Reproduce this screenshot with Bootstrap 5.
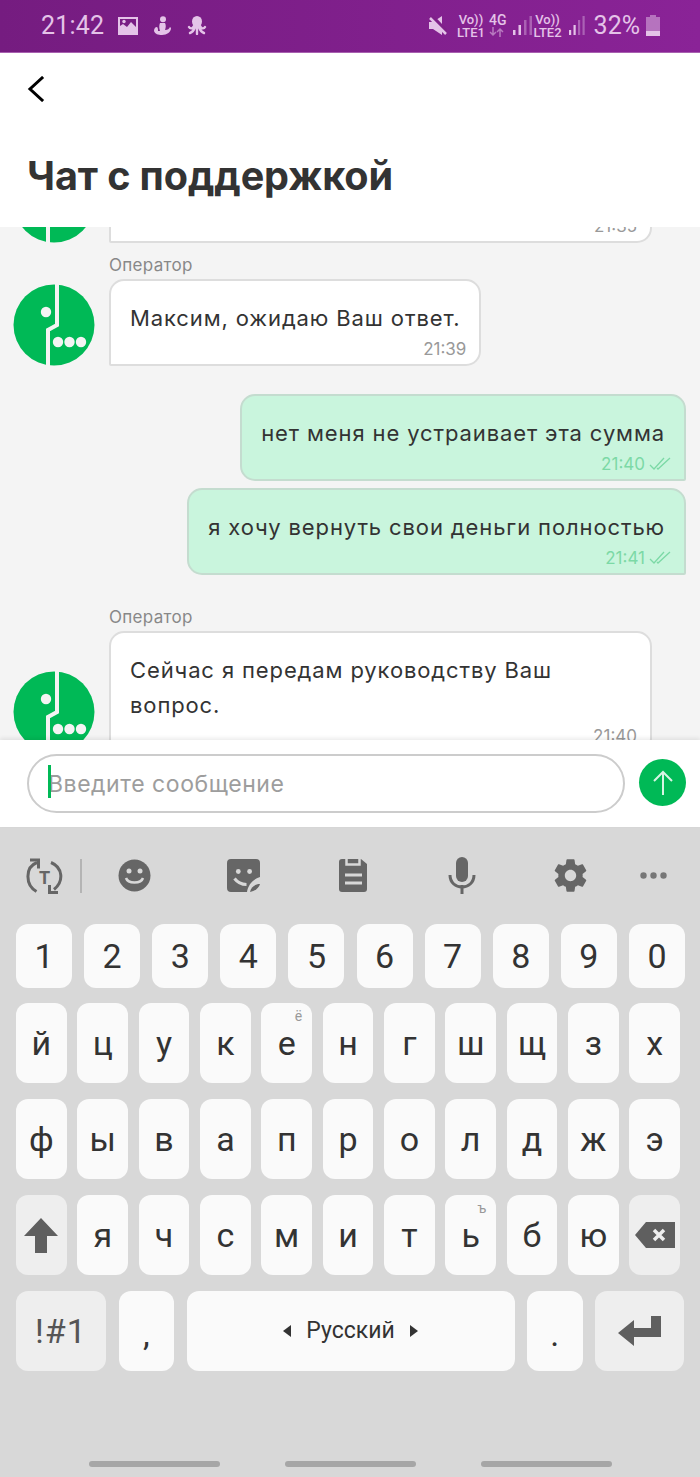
<!DOCTYPE html>
<html lang="ru">

<head>
    <meta charset="UTF-8">
    <title>Чат с поддержкой</title>
    <link href="https://cdn.jsdelivr.net/npm/bootstrap@5.3.0/dist/css/bootstrap.min.css" rel="stylesheet">
    <style>
        html, body { margin: 0; background: #d8d8d8; }
        .phone { width: 700px; height: 1477px; overflow: hidden; font-family: Inter, "Noto Sans", sans-serif; }

        /* status bar */
        .status-bar { height: 53px; padding: 0 40px 1px 41px; background: linear-gradient(90deg, #751c80, #8a2397); border-bottom: 1px solid #a860b0; color: #e4c3e8; font-family: Roboto, sans-serif; }
        .status-time { font-size: 25px; letter-spacing: .2px; margin-right: 14px; }
        .status-pct { font-size: 25px; margin: 0 6px 0 9px; }
        .net-tag { font-size: 13px; line-height: 13px; font-weight: 500; text-align: center; }
        .st-mute { margin-right: 10px; }
        .st-lte { margin-right: 4px; }
        .st-lte.two { margin-right: 7px; }
        .st-four { margin-right: 7px; font-size: 14px; }

        /* header */
        .app-head { height: 174px; background: #fff; padding: 23px 0 0 27px; position: relative; z-index: 2; }
        .app-title { font-size: 39.6px; font-weight: 700; line-height: 46px; color: #333; margin: 51px 0 0 0; letter-spacing: -.1px; }

        /* chat */
        .chat-pane { height: 513px; overflow: hidden; background: #f4f4f4; padding: 0 14px 0 13px; }
        .msg-bubble { border: 2px solid #ddd; background: #fff; padding: 20px 19px 5px; font-size: 22px; line-height: 35px; letter-spacing: .88px; color: #333; border-radius: 15px 15px 15px 2px; }
        .msg-bubble.mine { background: #c9f5dd; border-color: #c4dccf; border-radius: 15px 15px 2px 15px; }
        .msg-time { font-size: 17px; line-height: 20px; color: #999; text-align: right; margin: 3px -6px 0 0; letter-spacing: 0; }
        .mine .msg-time { color: #7cd9a6; }
        .op-label { font-size: 17px; line-height: 22px; color: #888; margin: 0 0 3px 96px; letter-spacing: .3px; }
        .op-row { gap: 14px; }
        .op-row.cut-row { margin-top: -66px; }
        .op-logo { width: 82px; height: 82px; flex: none; }
        .top-cut { height: 76px; width: 543px; }

        /* input */
        .input-bar { height: 87px; background: #fff; padding: 14px 14px 0 27px; box-shadow: 0 -2px 4px rgba(0,0,0,.08); position: relative; z-index: 2; gap: 14px; }
        .msg-field { height: 59px; border: 2px solid #ccc; border-radius: 30px; padding-left: 19px; font-size: 23px; letter-spacing: .55px; color: #333; background: #fff; width: 598px; outline: 0; }
        .msg-field::placeholder { color: #9d9d9d; opacity: 1; }
        .caret-mark { position: absolute; left: 48px; top: 25px; width: 3px; height: 33px; background: #00b956; }
        .send-round { width: 47px; height: 47px; background: #00b956; border: 0; border-radius: 50%; margin-top: 5px; padding: 0; }

        /* keyboard */
        .kb-wrap { height: 650px; background: #d8d8d8; font-family: Roboto, sans-serif; padding: 0 15px 0 16px; }
        .kb-tools { height: 97px; color: #666; }
        .tool-t { width: 56px; }
        .tool-sep { width: 2px; height: 34px; background: #b4b4b4; margin: 0 0 0 8px; }
        .tool-cell { width: 109px; }
        .tool-cell.first { margin-left: -2px; }
        .tool-more { width: 54px; margin-left: 1px; }
        .kb-row { gap: 10.55px; margin-bottom: 16px; margin-right: 5px; }
        .kb-row.digits { gap: 12.1px; margin-bottom: 15px; margin-right: 0; }
        .kb-key { flex: 1 1 0; height: 80px; background: #fafafa; border-radius: 12px; font-size: 34px; color: #333; position: relative; }
        .digits .kb-key { height: 64px; font-size: 34px; }
        .kb-key.func { background: #eee; color: #555; }
        .kb-key sup { position: absolute; top: 6px; right: 10px; font-size: 14px; line-height: 1; color: #999; }
        .kb-row.bottom { gap: 12.5px; margin-right: 0; }
        .kb-row.bottom .kb-key { flex: none; }
        .w-sym { width: 90px; font-size: 34px !important; letter-spacing: 1px; }
        .w-dot { width: 55.5px; padding-top: 6px; }
        .w-space { width: 328px; font-size: 23px !important; gap: 15px; }
        .w-enter { width: 89px; }
        .gesture-row { margin-top: 90px; height: 6px; padding-left: 73px; }
        .gesture-bar { width: 131px; height: 6px; border-radius: 3px; background: #a6a6a6; margin-right: 65px; }
    </style>
</head>

<body>
    <div class="phone d-flex flex-column">
        <!-- status bar -->
        <div class="status-bar d-flex align-items-center">
            <span class="status-time">21:42</span>
            <svg width="20" height="18" viewBox="0 0 20 18" fill="#e4c3e8" class="me-3"><path fill-rule="evenodd" d="M0 0h20v18H0zM2 2v7l3-2 4 3 4-5 5 5V2z"/><circle cx="6" cy="4.500" r="1.700"/></svg>
            <svg width="17" height="19" viewBox="0 0 17 19" fill="#e4c3e8" class="me-3"><circle cx="9" cy="3.200" r="3"/><path d="M6 7h5c1 2 1 4 0 7 3 0 4-1 5-3l1 1c0 4-4 7-9 7-4 0-7-1-8-4 0-2 1-4 3-4 1 1 1 2 1 4h2c-1-3-1-6 0-8z"/></svg>
            <svg width="20" height="19" viewBox="0 0 20 19" fill="none" stroke="#e4c3e8" stroke-width="2.400" stroke-linecap="round"><ellipse cx="10" cy="5.500" rx="5" ry="5.500" fill="#e4c3e8" stroke="none"/><path d="M7 10c-1 3-4 3-5 1M8 11c-1 3-2 5-5 6M10 11v7M12 11c1 3 2 5 5 6M13 10c1 3 4 3 5 1"/></svg>

            <div class="ms-auto d-flex align-items-center">
                <svg width="18" height="19" viewBox="0 0 18 19" fill="#e4c3e8" class="st-mute"><path d="M0 6h4l9-6v19L4 13H0z"/><path d="M2 0l16 17" stroke="#7f2089" stroke-width="5"/><path d="M1 2l16 16" stroke="#e4c3e8" stroke-width="2.500"/></svg>
                <div class="net-tag st-lte"><div>Vo))</div><div>LTE1</div></div>
                <div class="net-tag st-four"><div>4G</div>
                    <svg width="15" height="10" viewBox="0 0 15 10" fill="none" stroke="#e4c3e8" stroke-width="1.500" opacity=".55" class="d-block"><path d="M4 0v8M1 5l3 3 3-3M11 10V2M8 5l3-3 3 3"/></svg>
                </div>
                <svg width="20" height="19" viewBox="0 0 20 19" fill="#e4c3e8"><rect x="0" y="14" width="2.500" height="5"/><rect x="5.500" y="9" width="2.500" height="10"/><rect x="11" y="4" width="2.500" height="15" opacity=".4"/><rect x="16.500" y="0" width="2.500" height="19" opacity=".4"/></svg>
                <div class="net-tag st-lte two"><div>Vo))</div><div>LTE2</div></div>
                <svg width="16" height="19" viewBox="0 0 16 19" fill="#e4c3e8"><rect x="0" y="14" width="2.200" height="5"/><rect x="4.500" y="9" width="2.200" height="10"/><rect x="9" y="4" width="2.200" height="15" opacity=".4"/><rect x="13.500" y="0" width="2.200" height="19" opacity=".4"/></svg>
                <span class="status-pct">32%</span>
                <svg width="14" height="21" viewBox="0 0 14 21" fill="#e4c3e8"><path d="M4 0h6v2h4v19H0V2h4z" opacity=".5"/><rect y="16" width="14" height="5"/></svg>
            </div>
        </div>

        <!-- header -->
        <div class="app-head">
            <svg width="18" height="26" viewBox="0 0 18 26" fill="none" stroke="#000" stroke-width="3" stroke-linecap="square" class="d-block"><path d="M15 2L3 13l12 11"/></svg>
            <h1 class="app-title">Чат с поддержкой</h1>
        </div>

        <!-- messages -->
        <div class="chat-pane">
            <div class="d-flex op-row cut-row align-items-end">
                <svg class="op-logo" viewBox="0 0 82 82"><use href="#mf-logo"/></svg>
                <div class="msg-bubble top-cut d-flex flex-column justify-content-end"><div class="msg-time">21:35</div></div>
            </div>

            <div class="op-label" style="margin-top:11px">Оператор</div>
            <div class="d-flex op-row align-items-end">
                <svg class="op-logo" viewBox="0 0 82 82"><use href="#mf-logo"/></svg>
                <div class="msg-bubble">Максим, ожидаю Ваш ответ.<div class="msg-time">21:39</div></div>
            </div>

            <div class="d-flex justify-content-end" style="margin-top:28px">
                <div class="msg-bubble mine">нет меня не устраивает эта сумма
                    <div class="msg-time d-flex justify-content-end align-items-center gap-1">21:40
                        <svg width="22" height="14" viewBox="0 0 22 14" fill="none" stroke="#7cd9a6" stroke-width="1.300"><path d="M1 8l4 4L15 1M8 11l1 1L21 1"/></svg>
                    </div>
                </div>
            </div>
            <div class="d-flex justify-content-end" style="margin-top:7px">
                <div class="msg-bubble mine">я хочу вернуть свои деньги полностью
                    <div class="msg-time d-flex justify-content-end align-items-center gap-1">21:41
                        <svg width="22" height="14" viewBox="0 0 22 14" fill="none" stroke="#7cd9a6" stroke-width="1.300"><path d="M1 8l4 4L15 1M8 11l1 1L21 1"/></svg>
                    </div>
                </div>
            </div>

            <div class="op-label" style="margin-top:31px">Оператор</div>
            <div class="d-flex op-row align-items-end">
                <svg class="op-logo" viewBox="0 0 82 82"><use href="#mf-logo"/></svg>
                <div class="msg-bubble" style="width:543px">Сейчас я передам руководству Ваш вопрос.<div class="msg-time">21:40</div></div>
            </div>
        </div>

        <!-- input -->
        <div class="input-bar d-flex align-items-start">
            <input class="msg-field" type="text" placeholder="Введите сообщение">
            <span class="caret-mark"></span>
            <button class="send-round d-flex align-items-center justify-content-center" type="button" aria-label="Отправить">
                <svg width="22" height="26" viewBox="0 0 22 26" fill="none" stroke="#d6f5e3" stroke-width="2"><path d="M11 25V2M2 11l9-9 9 9"/></svg>
            </button>
        </div>

        <!-- keyboard -->
        <div class="kb-wrap">
            <div class="kb-tools d-flex align-items-center">
                <div class="tool-t d-flex justify-content-center">
                    <svg width="37" height="36" viewBox="0 0 37 36" fill="none" stroke="#666" stroke-width="3"><path d="M11 4.500C-1 9-1 27 10.500 33.500M25 4.500c12 5 13 19 3 27"/><path d="M4 2h8.500v8.500M32 34.500h-8.500V27"/><text x="18.500" y="26" text-anchor="middle" font-family="Roboto, sans-serif" font-size="18" font-weight="700" fill="#666" stroke="none">T</text></svg>
                </div>
                <span class="tool-sep"></span>
                <div class="tool-cell first d-flex justify-content-center">
                    <svg width="33" height="33" viewBox="0 0 33 33"><circle cx="16.500" cy="16.500" r="16" fill="#666"/><circle cx="11" cy="12" r="2.500" fill="#d8d8d8"/><circle cx="22" cy="12" r="2.500" fill="#d8d8d8"/><path d="M8 19c2 6 15 6 17 0" fill="none" stroke="#d8d8d8" stroke-width="2.500"/></svg>
                </div>
                <div class="tool-cell d-flex justify-content-center">
                    <svg width="33" height="33" viewBox="0 0 33 33"><path d="M4 0h25a4 4 0 0 1 4 4v14c-7 2-12 8-13 15H4a4 4 0 0 1-4-4V4a4 4 0 0 1 4-4z" fill="#666"/><circle cx="11.300" cy="12.500" r="2.400" fill="#d8d8d8"/><circle cx="22.600" cy="12.500" r="2.400" fill="#d8d8d8"/><path d="M7.500 19.500c3 4 7 6 12 6" fill="none" stroke="#d8d8d8" stroke-width="3"/><path d="M33 25c-1 4-5 7-10 8 1-5 5-8 10-8z" fill="#666"/></svg>
                </div>
                <div class="tool-cell d-flex justify-content-center">
                    <svg width="28" height="33" viewBox="0 0 28 33"><path d="M3 0h19l6 5v25a3 3 0 0 1-3 3H3a3 3 0 0 1-3-3V3a3 3 0 0 1 3-3z" fill="#666"/><path d="M7.500 0v5.500h13V0" fill="none" stroke="#d8d8d8" stroke-width="2.500"/><path d="M6 16h17M6 24h17" stroke="#d8d8d8" stroke-width="3"/></svg>
                </div>
                <div class="tool-cell d-flex justify-content-center">
                    <svg width="28" height="37" viewBox="0 0 28 37"><rect x="8" y="0" width="12" height="25" rx="6" fill="#666"/><path d="M2 18c0 16 24 16 24 0" fill="none" stroke="#666" stroke-width="3"/><rect x="12.500" y="28" width="3" height="9" fill="#666"/></svg>
                </div>
                <div class="tool-cell d-flex justify-content-center">
                    <svg width="39" height="39" viewBox="0 0 24 24" fill="#666"><path d="M19.430 12.980c.04-.32.07-.64.07-.98s-.03-.66-.07-.98l2.110-1.650c.19-.15.24-.42.12-.64l-2-3.460c-.12-.22-.39-.3-.61-.22l-2.490 1c-.52-.4-1.080-.73-1.690-.98l-.38-2.650C14.460 2.180 14.250 2 14 2h-4c-.25 0-.46.18-.49.42l-.38 2.650c-.61.25-1.170.59-1.690.98l-2.490-1c-.23-.09-.49 0-.61.22l-2 3.460c-.13.22-.07.49.12.64l2.110 1.650c-.04.32-.07.65-.07.98s.03.66.07.98l-2.110 1.650c-.19.15-.24.42-.12.64l2 3.460c.12.22.39.3.61.22l2.490-1c.52.4 1.080.73 1.690.98l.38 2.650c.03.24.24.42.49.42h4c.25 0 .46-.18.49-.42l.38-2.650c.61-.25 1.170-.59 1.690-.98l2.490 1c.23.09.49 0 .61-.22l2-3.460c.12-.22.07-.49-.12-.64l-2.110-1.650zM12 15.500c-1.930 0-3.500-1.570-3.500-3.500s1.570-3.500 3.500-3.500 3.500 1.570 3.500 3.500-1.570 3.500-3.500 3.500z"/></svg>
                </div>
                <div class="tool-more d-flex justify-content-center">
                    <svg width="27" height="7" viewBox="0 0 27 7" fill="#777"><circle cx="3.500" cy="3.500" r="3.200"/><circle cx="13.500" cy="3.500" r="3.200"/><circle cx="23.500" cy="3.500" r="3.200"/></svg>
                </div>
            </div>

            <div class="kb-row digits d-flex">
                <div class="kb-key d-flex align-items-center justify-content-center">1</div>
                <div class="kb-key d-flex align-items-center justify-content-center">2</div>
                <div class="kb-key d-flex align-items-center justify-content-center">3</div>
                <div class="kb-key d-flex align-items-center justify-content-center">4</div>
                <div class="kb-key d-flex align-items-center justify-content-center">5</div>
                <div class="kb-key d-flex align-items-center justify-content-center">6</div>
                <div class="kb-key d-flex align-items-center justify-content-center">7</div>
                <div class="kb-key d-flex align-items-center justify-content-center">8</div>
                <div class="kb-key d-flex align-items-center justify-content-center">9</div>
                <div class="kb-key d-flex align-items-center justify-content-center">0</div>
            </div>
            <div class="kb-row d-flex">
                <div class="kb-key d-flex align-items-center justify-content-center">й</div>
                <div class="kb-key d-flex align-items-center justify-content-center">ц</div>
                <div class="kb-key d-flex align-items-center justify-content-center">у</div>
                <div class="kb-key d-flex align-items-center justify-content-center">к</div>
                <div class="kb-key d-flex align-items-center justify-content-center">е<sup>ё</sup></div>
                <div class="kb-key d-flex align-items-center justify-content-center">н</div>
                <div class="kb-key d-flex align-items-center justify-content-center">г</div>
                <div class="kb-key d-flex align-items-center justify-content-center">ш</div>
                <div class="kb-key d-flex align-items-center justify-content-center">щ</div>
                <div class="kb-key d-flex align-items-center justify-content-center">з</div>
                <div class="kb-key d-flex align-items-center justify-content-center">х</div>
            </div>
            <div class="kb-row d-flex">
                <div class="kb-key d-flex align-items-center justify-content-center">ф</div>
                <div class="kb-key d-flex align-items-center justify-content-center">ы</div>
                <div class="kb-key d-flex align-items-center justify-content-center">в</div>
                <div class="kb-key d-flex align-items-center justify-content-center">а</div>
                <div class="kb-key d-flex align-items-center justify-content-center">п</div>
                <div class="kb-key d-flex align-items-center justify-content-center">р</div>
                <div class="kb-key d-flex align-items-center justify-content-center">о</div>
                <div class="kb-key d-flex align-items-center justify-content-center">л</div>
                <div class="kb-key d-flex align-items-center justify-content-center">д</div>
                <div class="kb-key d-flex align-items-center justify-content-center">ж</div>
                <div class="kb-key d-flex align-items-center justify-content-center">э</div>
            </div>
            <div class="kb-row d-flex">
                <div class="kb-key func d-flex align-items-center justify-content-center">
                    <svg width="34" height="35" viewBox="0 0 34 35" fill="#5f5f5f"><path d="M17 0l17 18H23v17H11V18H0z"/></svg>
                </div>
                <div class="kb-key d-flex align-items-center justify-content-center">я</div>
                <div class="kb-key d-flex align-items-center justify-content-center">ч</div>
                <div class="kb-key d-flex align-items-center justify-content-center">с</div>
                <div class="kb-key d-flex align-items-center justify-content-center">м</div>
                <div class="kb-key d-flex align-items-center justify-content-center">и</div>
                <div class="kb-key d-flex align-items-center justify-content-center">т</div>
                <div class="kb-key d-flex align-items-center justify-content-center">ь<sup>ъ</sup></div>
                <div class="kb-key d-flex align-items-center justify-content-center">б</div>
                <div class="kb-key d-flex align-items-center justify-content-center">ю</div>
                <div class="kb-key func d-flex align-items-center justify-content-center">
                    <svg width="40" height="26" viewBox="0 0 40 26"><path d="M11 0h29v26H11L0 13z" fill="#5f5f5f"/><path d="M19 8l10 10M29 8L19 18" stroke="#eee" stroke-width="3.500"/></svg>
                </div>
            </div>
            <div class="kb-row bottom d-flex">
                <div class="kb-key func w-sym d-flex align-items-center justify-content-center">!#1</div>
                <div class="kb-key w-dot d-flex align-items-center justify-content-center">,</div>
                <div class="kb-key w-space d-flex align-items-center justify-content-center">
                    <svg width="8" height="12" viewBox="0 0 8 12" fill="#333"><path d="M8 0v12L0 6z"/></svg>
                    <span>Русский</span>
                    <svg width="8" height="12" viewBox="0 0 8 12" fill="#333"><path d="M0 0v12l8-6z"/></svg>
                </div>
                <div class="kb-key w-dot d-flex align-items-center justify-content-center">.</div>
                <div class="kb-key func w-enter d-flex align-items-center justify-content-center">
                    <svg width="43" height="30" viewBox="0 0 43 30" fill="#5f5f5f"><path d="M33 0h10v21H16v9L0 17 16 4v8h17z"/></svg>
                </div>
            </div>
            <div class="gesture-row d-flex">
                <span class="gesture-bar"></span>
                <span class="gesture-bar"></span>
                <span class="gesture-bar"></span>
            </div>
        </div>
    </div>

    <svg width="0" height="0" class="d-block">
        <defs>
            <g id="mf-logo">
                <circle cx="41" cy="41" r="40.500" fill="#00b956"/>
                <path d="M44 0V41L35 46V82" fill="none" stroke="#f4f4f4" stroke-width="4"/>
                <circle cx="33" cy="28" r="5.200" fill="#f4f4f4"/>
                <circle cx="45" cy="58" r="5.200" fill="#f4f4f4"/>
                <circle cx="56.500" cy="58" r="5.200" fill="#f4f4f4"/>
                <circle cx="68" cy="58" r="5.200" fill="#f4f4f4"/>
            </g>
        </defs>
    </svg>

    <script src="https://cdn.jsdelivr.net/npm/bootstrap@5.3.0/dist/js/bootstrap.bundle.min.js"></script>
</body>

</html>
